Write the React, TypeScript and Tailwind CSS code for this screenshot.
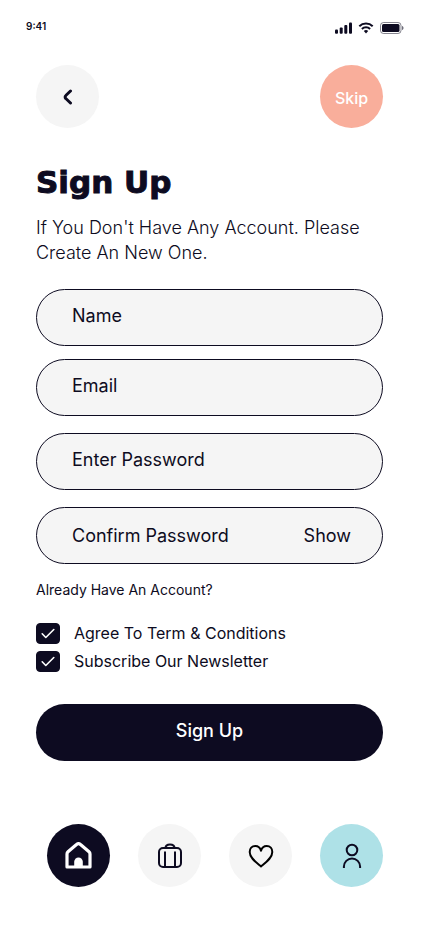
import { useState } from "react";

const fields = [
  { id: "name", label: "Name", type: "text", spacing: "mb-[13px]" },
  { id: "email", label: "Email", type: "email", spacing: "mb-[17px]" },
  { id: "password", label: "Enter Password", type: "password", spacing: "mb-[17px]" },
];

const options = [
  { id: "terms", label: "Agree To Term & Conditions" },
  { id: "newsletter", label: "Subscribe Our Newsletter" },
];

function StatusBar() {
  return (
    <div className="flex items-start justify-between px-[26px] pt-5">
      <span className="text-[10px] leading-3 font-semibold">9:41</span>
      <div className="flex h-4 items-center gap-[6px]" aria-hidden="true">
        <svg width="17" height="12" viewBox="0 0 17 12" fill="currentColor">
          <rect x="0" y="7.5" width="3" height="4.2" rx="1" />
          <rect x="4.7" y="5.4" width="3" height="6.3" rx="1" />
          <rect x="9.3" y="3" width="3" height="8.7" rx="1" />
          <rect x="14" y="0.5" width="3" height="11.2" rx="1" />
        </svg>
        <svg width="16" height="12" viewBox="0 0 16 12" fill="none" stroke="currentColor" strokeWidth="2">
          <path d="M1.3 4.2a9.6 9.6 0 0 1 13.4 0" />
          <path d="M3.9 7a5.9 5.9 0 0 1 8.2 0" />
          <path d="M5.8 9.1a3.2 3.2 0 0 1 4.4 0L8 11.4z" fill="currentColor" stroke="none" />
        </svg>
        <svg width="24" height="12" viewBox="0 0 24 12" fill="none">
          <rect x="0.5" y="0.5" width="20.5" height="11" rx="3" stroke="currentColor" strokeOpacity="0.5" />
          <rect x="2" y="2" width="17.5" height="8" rx="1.5" fill="currentColor" />
          <path d="M22 4v4c1-.4 1.5-1.1 1.5-2S23 4.400 22 4z" fill="currentColor" fillOpacity="0.6" />
        </svg>
      </div>
    </div>
  );
}

function HomeIcon() {
  return (
    <svg width="28" height="28" viewBox="0 0 28 28" fill="none" aria-hidden="true">
      <path
        d="M2 25V12c0-1 .3-1.700 1-2.300l8.200-7a3.400 3.400 0 0 1 4.600 0l8.200 7c.7.600 1 1.300 1 2.300v13z"
        stroke="white"
        strokeWidth="3.2"
        strokeLinejoin="round"
      />
      <path d="M9.200 25v-5.200a4.300 4.300 0 0 1 8.600 0V25z" fill="white" />
    </svg>
  );
}

function SuitcaseIcon() {
  return (
    <svg width="26" height="26" viewBox="0 0 26 26" fill="none" stroke="currentColor" strokeWidth="2" aria-hidden="true">
      <rect x="2" y="5" width="22" height="19" rx="4" />
      <path d="M8.500 5c0-2.400 2-3.600 4.500-3.600s4.500 1.200 4.500 3.600M8 8.500v15M18 8.500v15" />
    </svg>
  );
}

function HeartIcon() {
  return (
    <svg width="26" height="26" viewBox="0 0 26 26" fill="none" stroke="black" strokeWidth="2" strokeLinejoin="round" aria-hidden="true">
      <path d="M13 7.800C12.200 4.900 10.100 3 7.300 3 3.900 3 1.700 5.600 1.700 9c0 5.900 6.300 10.300 11.300 14.500C18 19.300 24.300 14.900 24.300 9c0-3.400-2.200-6-5.600-6-2.800 0-4.900 1.900-5.700 4.800z" />
    </svg>
  );
}

function UserIcon() {
  return (
    <svg width="26" height="26" viewBox="0 0 26 26" fill="none" stroke="currentColor" strokeWidth="2" aria-hidden="true">
      <circle cx="13" cy="7" r="5.3" />
      <path d="M4.900 25v-1.400a8.100 8.100 0 0 1 16.200 0V25" />
    </svg>
  );
}

const navItems = [
  { label: "Home", icon: HomeIcon, color: "bg-[#0d0b21]" },
  { label: "Trips", icon: SuitcaseIcon, color: "bg-[#f5f5f5]" },
  { label: "Favourites", icon: HeartIcon, color: "bg-[#f5f5f5]" },
  { label: "Profile", icon: UserIcon, color: "bg-[#aee1e7]" },
];

export default function App() {
  const [showPassword, setShowPassword] = useState(false);

  return (
    <div className="min-h-screen bg-white font-['Inter',sans-serif] text-[#0d0b21]">
      <StatusBar />

      <main className="pt-[29px] pr-[47px] pl-9">
        <div className="flex items-center justify-between">
          <button aria-label="Back" className="flex size-[63px] items-center justify-center rounded-full bg-[#f5f5f5]">
            <svg width="10" height="16" viewBox="0 0 10 16" fill="none" stroke="currentColor" strokeWidth="3" strokeLinecap="round" aria-hidden="true">
              <path d="M7.500 2 2.800 6.500a2 2 0 0 0 0 3L7.500 14" />
            </svg>
          </button>
          <button className="size-[63px] rounded-full bg-[#f9ae9b] pt-0.5 text-base font-medium text-white">Skip</button>
        </div>

        <h1 className="mt-[34px] font-['DejaVu_Sans',sans-serif] text-[31px] leading-10 font-bold [-webkit-text-stroke:1px_#0d0b21]">
          Sign Up
        </h1>
        <p className="mt-[13px] text-lg leading-[25px] font-light">
          If You Don't Have Any Account. Please Create An New One.
        </p>

        <form className="mt-6" onSubmit={(e) => e.preventDefault()}>
          {fields.map(({ id, label, type, spacing }) => (
            <input
              key={id}
              id={id}
              type={type}
              placeholder={label}
              aria-label={label}
              className={`block h-[57px] w-full rounded-full border border-[#0d0b21] bg-[#f5f5f5] px-[35px] pb-1 text-lg placeholder:text-[#0d0b21] ${spacing}`}
            />
          ))}
          <div className="flex h-[57px] items-center rounded-full border border-[#0d0b21] bg-[#f5f5f5] pr-[31px] pl-[35px] text-lg">
            <input
              type={showPassword ? "text" : "password"}
              placeholder="Confirm Password"
              aria-label="Confirm Password"
              className="min-w-0 flex-1 placeholder:text-[#0d0b21]"
            />
            <button type="button" onClick={() => setShowPassword(!showPassword)}>
              Show
            </button>
          </div>

          <a href="#login" className="mt-4 block text-sm leading-5">
            Already Have An Account?
          </a>

          <div className="mt-[22px] flex flex-col gap-[6px]">
            {options.map(({ id, label }) => (
              <label key={id} htmlFor={id} className="flex h-[22px] items-center gap-[14px]">
                <span className="grid place-items-center">
                  <input
                    id={id}
                    type="checkbox"
                    defaultChecked
                    className="peer col-start-1 row-start-1 h-[21px] w-6 appearance-none rounded-sm border border-[#0d0b21] checked:bg-[#0d0b21]"
                  />
                  <svg
                    width="14"
                    height="11"
                    viewBox="0 0 14 11"
                    fill="none"
                    stroke="white"
                    strokeWidth="1.6"
                    strokeLinecap="round"
                    strokeLinejoin="round"
                    className="pointer-events-none invisible col-start-1 row-start-1 peer-checked:visible"
                    aria-hidden="true"
                  >
                    <path d="m1.200 5.800 3.600 3.700 8-8" />
                  </svg>
                </span>
                {label}
              </label>
            ))}
          </div>

          <button type="submit" className="mt-8 h-[57px] w-full rounded-full bg-[#0d0b21] pb-1 text-lg font-medium text-white">
            Sign Up
          </button>
        </form>
      </main>

      <nav className="mt-[63px] flex justify-between px-[47px] pb-11">
        {navItems.map(({ label, icon: Icon, color }) => (
          <a key={label} href={`#${label.toLowerCase()}`} aria-label={label} className={`flex size-[63px] items-center justify-center rounded-full ${color}`}>
            <Icon />
          </a>
        ))}
      </nav>
    </div>
  );
}
